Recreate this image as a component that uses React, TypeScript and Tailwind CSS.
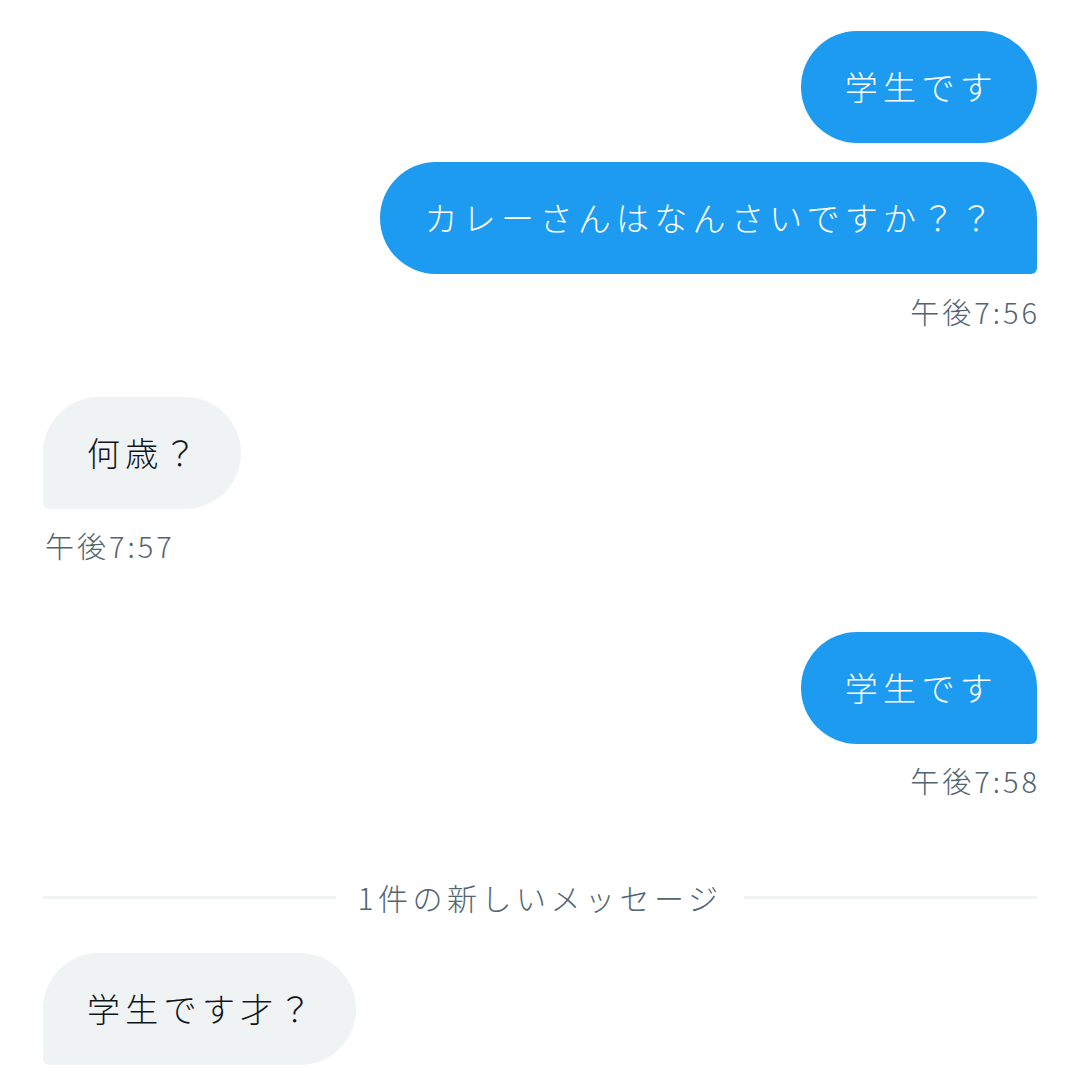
import React from "react";

const font = { fontFamily: '"Noto Sans CJK JP", "Noto Sans", sans-serif' };

function Sent({ text, tail, className = "" }: { text: string; tail: boolean; className?: string }) {
  return (
    <div className={`flex justify-end ${className}`}>
      <div
        className={`h-[112px] flex items-center bg-[#1d9bf0] text-white text-[33px] font-light tracking-[5.3px] pl-[44px] pr-[39px] rounded-[56px] ${tail ? "rounded-br-[6px]" : ""}`}
      >
        {text}
      </div>
    </div>
  );
}

function Received({ text, className = "" }: { text: string; className?: string }) {
  return (
    <div className={`flex justify-start ${className}`}>
      <div className="h-[112px] flex items-center bg-[#eff3f4] text-[#0f1419] text-[33px] font-light tracking-[5.3px] pl-[44px] pr-[39px] rounded-[56px] rounded-bl-[6px]">
        {text}
      </div>
    </div>
  );
}

function Time({ text, right, className = "" }: { text: string; right?: boolean; className?: string }) {
  return (
    <div
      className={`h-[40px] flex items-center text-[29px] font-light leading-[40px] text-[#536471] tracking-[3px] ${right ? "justify-end -mr-[3px]" : "justify-start pl-[2px]"} ${className}`}
    >
      {text}
    </div>
  );
}

export default function App() {
  return (
    <div style={font} className="w-[1080px] h-[1080px] bg-white overflow-hidden flex flex-col px-[43px] pt-[31px]">
      <Sent text="学生です" tail={false} />
      <Sent text="カレーさんはなんさいですか？？" tail className="mt-[19px]" />
      <Time text="午後7:56" right className="mt-[17px]" />
      <Received text="何歳？" className="mt-[66px]" />
      <Time text="午後7:57" className="mt-[16px]" />
      <Sent text="学生です" tail className="mt-[67px]" />
      <Time text="午後7:58" right className="mt-[16px]" />
      <div className="mt-[77px] h-[40px] flex items-center gap-[22px]">
        <div className="flex-1 h-[3px] bg-[#eff3f4]" />
        <span className="text-[30px] font-light tracking-[4.5px] text-[#536471] leading-[40px]">1件の新しいメッセージ</span>
        <div className="flex-1 h-[3px] bg-[#eff3f4]" />
      </div>
      <Received text="学生です才？" className="mt-[36px]" />
    </div>
  );
}
